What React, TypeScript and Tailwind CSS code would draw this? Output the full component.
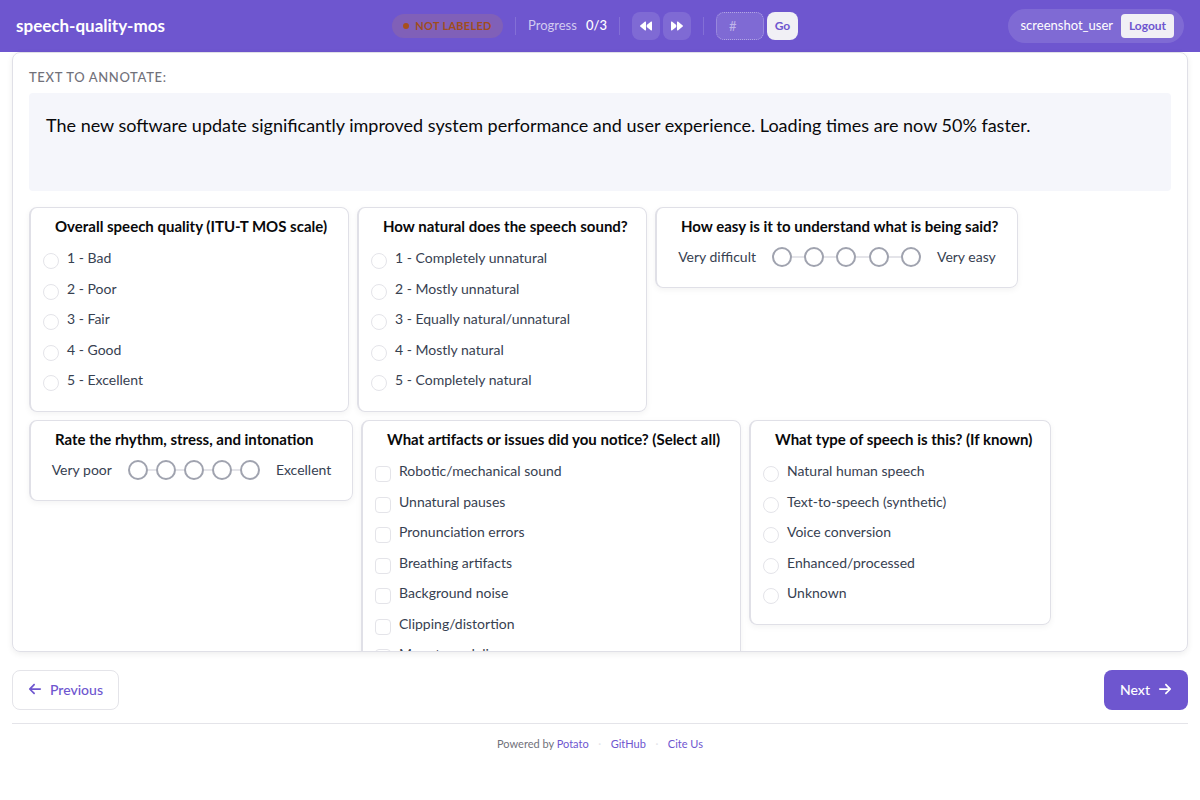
import { clsx } from 'clsx';
import { FaArrowLeft, FaArrowRight, FaBackward, FaForward } from 'react-icons/fa6';
import { Fragment, useState } from 'react';

interface ChoiceSchema {
  id: string;
  type: 'radio' | 'checkbox';
  title: string;
  options: string[];
  width: string;
  listHeight: string;
}

interface LikertSchema {
  id: string;
  type: 'likert';
  title: string;
  minLabel: string;
  maxLabel: string;
  size: number;
  width: string;
  scaleWidth: string;
}

type Schema = ChoiceSchema | LikertSchema;

const TEXT =
  'The new software update significantly improved system performance and user experience. Loading times are now 50% faster.';

const SCHEMAS: Schema[] = [
  {
    id: 'overall_quality',
    type: 'radio',
    title: 'Overall speech quality (ITU-T MOS scale)',
    options: ['1 - Bad', '2 - Poor', '3 - Fair', '4 - Good', '5 - Excellent'],
    width: 'w-80',
    listHeight: 'h-36',
  },
  {
    id: 'naturalness',
    type: 'radio',
    title: 'How natural does the speech sound?',
    options: [
      '1 - Completely unnatural',
      '2 - Mostly unnatural',
      '3 - Equally natural/unnatural',
      '4 - Mostly natural',
      '5 - Completely natural',
    ],
    width: 'w-[290px]',
    listHeight: 'h-36',
  },
  {
    id: 'intelligibility',
    type: 'likert',
    title: 'How easy is it to understand what is being said?',
    minLabel: 'Very difficult',
    maxLabel: 'Very easy',
    size: 5,
    width: 'w-[363px]',
    scaleWidth: 'w-[149px]',
  },
  {
    id: 'prosody',
    type: 'likert',
    title: 'Rate the rhythm, stress, and intonation',
    minLabel: 'Very poor',
    maxLabel: 'Excellent',
    size: 5,
    width: 'w-[324px]',
    scaleWidth: 'w-[132px]',
  },
  {
    id: 'artifacts',
    type: 'checkbox',
    title: 'What artifacts or issues did you notice? (Select all)',
    options: [
      'Robotic/mechanical sound',
      'Unnatural pauses',
      'Pronunciation errors',
      'Breathing artifacts',
      'Background noise',
      'Clipping/distortion',
      'Monotone delivery',
    ],
    width: 'w-[380px]',
    listHeight: 'h-[205px]',
  },
  {
    id: 'speech_type',
    type: 'radio',
    title: 'What type of speech is this? (If known)',
    options: [
      'Natural human speech',
      'Text-to-speech (synthetic)',
      'Voice conversion',
      'Enhanced/processed',
      'Unknown',
    ],
    width: 'w-[302px]',
    listHeight: 'h-36',
  },
];

function ChoiceList({ schema }: { schema: ChoiceSchema }) {
  return (
    <div className={clsx('flex flex-col justify-between', schema.listHeight)}>
      {schema.options.map(option => (
        <label key={option} className="flex h-[22px] items-end gap-2 pl-3 text-[14px] leading-[22px] text-[#374151]">
          <input
            type={schema.type}
            name={schema.id}
            value={option}
            className={clsx(
              'size-4 shrink-0 appearance-none border border-[#e4e4e9] bg-white checked:border-[#6e56cf] checked:bg-[#6e56cf]',
              schema.type === 'radio' ? 'rounded-full' : 'rounded-[4px]',
            )}
          />
          <span className="self-start">{option}</span>
        </label>
      ))}
    </div>
  );
}

function LikertScale({ schema }: { schema: LikertSchema }) {
  const points = Array.from({ length: schema.size }, (_, i) => i + 1);

  return (
    <div className="flex h-5 items-center justify-center gap-4 text-[14px] leading-5 text-[#374151]">
      <span className="whitespace-nowrap">{schema.minLabel}</span>
      <div className={clsx('flex shrink-0 items-center', schema.scaleWidth)}>
        {points.map(n => (
          <Fragment key={n}>
            {n > 1 && <div className="h-0.5 flex-1 bg-[#e4e4e9]" />}
            <input
              type="radio"
              name={schema.id}
              value={n}
              aria-label={`${schema.title} ${n}`}
              className="size-5 shrink-0 appearance-none rounded-full border-2 border-[#a0a3af] bg-white checked:bg-[#6e56cf]"
            />
          </Fragment>
        ))}
      </div>
      <span className="whitespace-nowrap">{schema.maxLabel}</span>
    </div>
  );
}

function SchemaCard({ schema }: { schema: Schema }) {
  return (
    <fieldset
      className={clsx(
        'min-w-0 rounded-lg border border-l-2 border-[#e0e0e7] bg-white pt-2 pb-5 shadow-[0_2px_6px_rgba(0,0,0,0.05)]',
        schema.width,
      )}
    >
      <h3 className="mb-2.5 pl-6 text-[15px] leading-[21px] font-bold whitespace-nowrap text-[#09090b]">
        {schema.title}
      </h3>
      {schema.type === 'likert' ? <LikertScale schema={schema} /> : <ChoiceList schema={schema} />}
    </fieldset>
  );
}

function Divider() {
  return <div className="mx-3 h-[18px] w-px bg-white/15" />;
}

function Header() {
  const [goTo, setGoTo] = useState('');

  return (
    <header className="grid h-[52px] grid-cols-[1fr_auto_1fr] items-center bg-[#6e56cf] px-4 text-white">
      <h1 className="text-[17px] leading-6 font-bold">speech-quality-mos</h1>

      <div className="flex items-center pr-2.5">
        <div className="flex h-6 w-[111px] items-center justify-center gap-1.5 rounded-full bg-[#8060b8] text-[11px] font-bold tracking-wide whitespace-nowrap text-[#a04d1c]">
          <span className="size-1.5 rounded-full bg-[#a8501b]" />
          NOT LABELED
        </div>
        <Divider />
        <div className="flex w-[79px] items-center justify-between text-[13px] whitespace-nowrap">
          <span className="text-white/70">Progress</span>
          <span className="font-medium">0/3</span>
        </div>
        <Divider />
        <div className="flex gap-[3px]">
          <button type="button" aria-label="Previous item" className="flex size-7 items-center justify-center rounded-lg bg-white/12">
            <FaBackward size={12} />
          </button>
          <button type="button" aria-label="Next item" className="flex size-7 items-center justify-center rounded-lg bg-white/12">
            <FaForward size={12} />
          </button>
        </div>
        <Divider />
        <div className="flex gap-[3px]">
          <input
            type="text"
            aria-label="Item number"
            placeholder="#"
            value={goTo}
            onChange={e => setGoTo(e.target.value)}
            className="h-7 w-12 rounded-lg border border-dotted border-white/40 bg-white/12 pl-3 text-[13px] placeholder:text-white/50"
          />
          <button type="button" className="h-7 w-[31px] rounded-lg bg-[#f1f0f5] text-[12px] font-bold text-[#6e56cf]">
            Go
          </button>
        </div>
      </div>

      <div className="flex h-[34px] items-center gap-2 justify-self-end rounded-full bg-white/12 pr-2.5 pl-3">
        <span className="text-[13px]">screenshot_user</span>
        <button type="button" className="h-6 w-[53px] rounded bg-[#f1f0f5] text-[12px] font-bold text-[#6e56cf]">
          Logout
        </button>
      </div>
    </header>
  );
}

export default function App() {
  return (
    <div className="min-h-screen bg-white font-['Lato','Liberation_Sans',sans-serif] text-[#09090b]">
      <Header />

      <main className="px-3">
        <section className="h-[calc(100vh-200px)] min-h-80 overflow-y-auto rounded-lg border border-[#e0e0e7] p-4 shadow-[0_2px_6px_rgba(0,0,0,0.07)] [scrollbar-width:none]">
          <h2 className="mb-2 text-[13px] leading-4 font-medium tracking-wider text-[#71717a] uppercase">
            Text to Annotate:
          </h2>
          <div className="mb-4 min-h-[98px] rounded bg-[#f5f6fb] p-[17px] text-[18px] leading-[30px]">{TEXT}</div>
          <form className="flex flex-wrap items-start gap-2">
            {SCHEMAS.map(schema => (
              <SchemaCard key={schema.id} schema={schema} />
            ))}
          </form>
        </section>

        <nav className="mt-[18px] mb-[13px] flex justify-between">
          <button
            type="button"
            className="flex h-10 w-[107px] items-center justify-center gap-2 rounded-lg border border-[#e4e4e9] bg-white pb-0.5 text-[14px] font-medium text-[#6e56cf]"
          >
            <FaArrowLeft size={14} />
            Previous
          </button>
          <button
            type="button"
            className="flex h-10 w-[84px] items-center justify-center gap-2 rounded-lg bg-[#6e56cf] pb-0.5 text-[14px] font-medium text-white"
          >
            Next
            <FaArrowRight size={14} />
          </button>
        </nav>

        <footer className="flex justify-center border-t border-[#e4e4e9] py-3 text-[11px] leading-4 text-[#71717a]">
          <span>
            Powered by <a href="#potato" className="text-[#6e56cf]">Potato</a>
          </span>
          <span className="w-[22px] text-center text-[#e4e4e9]">·</span>
          <a href="#github" className="text-[#6e56cf]">GitHub</a>
          <span className="w-[22px] text-center text-[#e4e4e9]">·</span>
          <a href="#cite" className="text-[#6e56cf]">Cite Us</a>
        </footer>
      </main>
    </div>
  );
}
